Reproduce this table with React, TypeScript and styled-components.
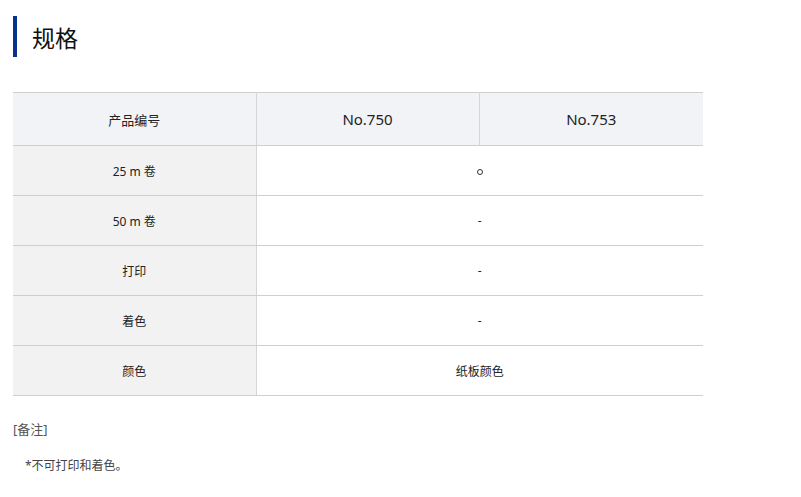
import styled, { createGlobalStyle } from "styled-components";

const GlobalStyle = createGlobalStyle`
  body {
    margin: 0;
    background: #fff;
    font-family: "Noto Sans", "Noto Sans CJK SC", sans-serif;
    color: #222;
  }
`;

const Page = styled.div`
  padding: 16px 13px 0;
  width: 690px;
`;

const Heading = styled.h2`
  margin: 0;
  height: 41px;
  display: flex;
  align-items: center;
  border-left: 4px solid #0b318f;
  padding-left: 15px;
  font-size: 23px;
  font-weight: 400;
  color: #111;
`;

const SpecTable = styled.table`
  margin-top: 35px;
  width: 690px;
  border-collapse: collapse;
  table-layout: fixed;
  border-top: 1px solid #cfcfcf;
`;

const HeadRow = styled.tr`
  height: 53px;
  background: #f2f3f7;
`;

const Row = styled.tr`
  height: 50px;
`;

const Cell = styled.td<{ $label?: boolean; $big?: boolean }>`
  padding: 0;
  text-align: center;
  vertical-align: middle;
  border-bottom: 1px solid #cfcfcf;
  font-size: ${(p) => (p.$big ? "15px" : p.$label ? "13px" : "12px")};
  color: #222;

  & + & {
    border-left: 1px solid #d6d6d6;
  }
`;

const LabelCell = styled(Cell)`
  background: #f2f2f2;
  font-size: 12px;
`;

const Mark = styled.span`
  display: inline-block;
  width: 4px;
  height: 4px;
  border: 1px solid #333;
  border-radius: 50%;
  vertical-align: middle;
`;

const Notes = styled.div`
  margin-top: 23px;
  font-size: 13px;
  color: #555;
`;

const NoteItem = styled.p`
  margin: 18px 0 0 12px;
  font-size: 12px;
  color: #444;
`;

const rows = [
  { label: "25 m 卷", value: "○" },
  { label: "50 m 卷", value: "-" },
  { label: "打印", value: "-" },
  { label: "着色", value: "-" },
  { label: "颜色", value: "纸板颜色" },
];

const App = () => (
  <>
    <GlobalStyle />
    <Page>
      <Heading>规格</Heading>
      <SpecTable>
        <colgroup>
          <col style={{ width: 243 }} />
          <col style={{ width: 223 }} />
          <col style={{ width: 224 }} />
        </colgroup>
        <tbody>
          <HeadRow>
            <Cell $label>产品编号</Cell>
            <Cell $big>No.750</Cell>
            <Cell $big>No.753</Cell>
          </HeadRow>
          {rows.map((r) => (
            <Row key={r.label}>
              <LabelCell>{r.label}</LabelCell>
              <Cell colSpan={2}>
                {r.value === "○" ? <Mark aria-label="○" /> : r.value}
              </Cell>
            </Row>
          ))}
        </tbody>
      </SpecTable>
      <Notes>[备注]</Notes>
      <NoteItem>*不可打印和着色。</NoteItem>
    </Page>
  </>
);

export default App;
